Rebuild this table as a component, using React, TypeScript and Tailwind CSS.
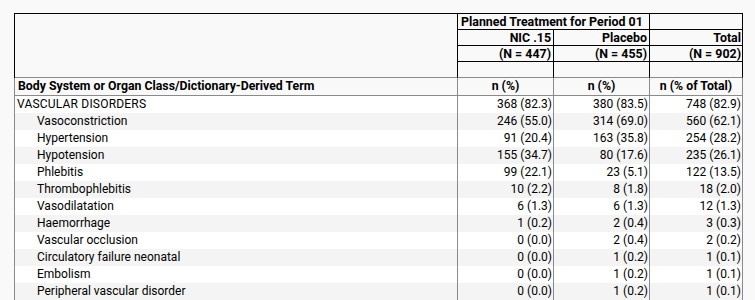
import React from "react";

const rows: [string, string, string, string, boolean][] = [
  ["VASCULAR DISORDERS", "368 (82.3)", "380 (83.5)", "748 (82.9)", false],
  ["Vasoconstriction", "246 (55.0)", "314 (69.0)", "560 (62.1)", true],
  ["Hypertension", "91 (20.4)", "163 (35.8)", "254 (28.2)", true],
  ["Hypotension", "155 (34.7)", "80 (17.6)", "235 (26.1)", true],
  ["Phlebitis", "99 (22.1)", "23 (5.1)", "122 (13.5)", true],
  ["Thrombophlebitis", "10 (2.2)", "8 (1.8)", "18 (2.0)", true],
  ["Vasodilatation", "6 (1.3)", "6 (1.3)", "12 (1.3)", true],
  ["Haemorrhage", "1 (0.2)", "2 (0.4)", "3 (0.3)", true],
  ["Vascular occlusion", "0 (0.0)", "2 (0.4)", "2 (0.2)", true],
  ["Circulatory failure neonatal", "0 (0.0)", "1 (0.2)", "1 (0.1)", true],
  ["Embolism", "0 (0.0)", "1 (0.2)", "1 (0.1)", true],
  ["Peripheral vascular disorder", "0 (0.0)", "1 (0.2)", "1 (0.1)", true],
];

export default function App() {
  return (
    <div
      className="w-[755px] h-[300px] overflow-hidden bg-[#f9f9f9] text-black text-[12px] pt-[13px] pl-[14px]"
      style={{ fontFamily: '"Segoe UI", Roboto, sans-serif' }}
    >
      <div className="w-[729px]">
        {/* Header block */}
        <div className="flex border-t border-l border-black h-[65px]">
          <div className="w-[443px] h-[64px] border-r border-black border-b border-b-[#8a8a8a]" />
          <div className="flex flex-col w-[285px] text-[12.4px]">
            <div className="flex h-[16px]">
              <div className="w-[192px] border-r border-b border-black pl-[3px] font-bold leading-[15px] whitespace-nowrap">
                Planned Treatment for Period 01
              </div>
              <div className="w-[93px] border-r border-b border-black" />
            </div>
            <div className="flex h-[16px] font-bold leading-[15px] whitespace-nowrap">
              <div className="w-[96px] border-r border-b border-black text-right pr-[2px]">NIC .15</div>
              <div className="w-[96px] border-r border-b border-black text-right pr-[2px]">Placebo</div>
              <div className="w-[93px] border-r border-b border-black text-right pr-[1px]">Total</div>
            </div>
            <div className="flex h-[16px] font-bold leading-[15px] whitespace-nowrap">
              <div className="w-[96px] border-r border-b border-black text-right pr-[2px]">(N = 447)</div>
              <div className="w-[96px] border-r border-b border-black text-right pr-[2px]">(N = 455)</div>
              <div className="w-[93px] border-r border-b border-black text-right pr-[1px]">(N = 902)</div>
            </div>
            <div className="flex h-[16px]">
              <div className="w-[96px] border-r border-r-black border-b border-b-[#8a8a8a]" />
              <div className="w-[96px] border-r border-r-black border-b border-b-[#8a8a8a]" />
              <div className="w-[93px] border-r border-r-black border-b border-b-[#8a8a8a]" />
            </div>
          </div>
        </div>
        {/* Column label row */}
        <div className="flex h-[18px] border-l border-[#8a8a8a] font-bold text-[12.3px] leading-[17px] whitespace-nowrap">
          <div className="w-[443px] border-r border-b border-[#8a8a8a] pl-[3px]">
            Body System or Organ Class/Dictionary-Derived Term
          </div>
          <div className="w-[96px] border-r border-b border-[#8a8a8a] text-center">n (%)</div>
          <div className="w-[96px] border-r border-b border-[#8a8a8a] text-center">n (%)</div>
          <div className="w-[93px] border-r border-b border-[#8a8a8a] text-center">n (% of Total)</div>
        </div>
        {/* Data rows */}
        {rows.map((r, i) => (
          <div
            key={i}
            className={`flex h-[17px] leading-[17px] whitespace-nowrap border-l border-[#8a8a8a] ${i % 2 === 0 ? "bg-white" : "bg-[#f4f4f4]"}`}
          >
            <div className={`w-[443px] border-r border-[#8a8a8a] ${r[4] ? "pl-[22px]" : "pl-[2px] tracking-[0.2px]"}`}>{r[0]}</div>
            <div className="w-[96px] border-r border-[#8a8a8a] text-right pr-[1px]">{r[1]}</div>
            <div className="w-[96px] border-r border-[#8a8a8a] text-right pr-[1px]">{r[2]}</div>
            <div className="w-[93px] border-r border-[#8a8a8a] text-right pr-[1px]">{r[3]}</div>
          </div>
        ))}
      </div>
    </div>
  );
}
